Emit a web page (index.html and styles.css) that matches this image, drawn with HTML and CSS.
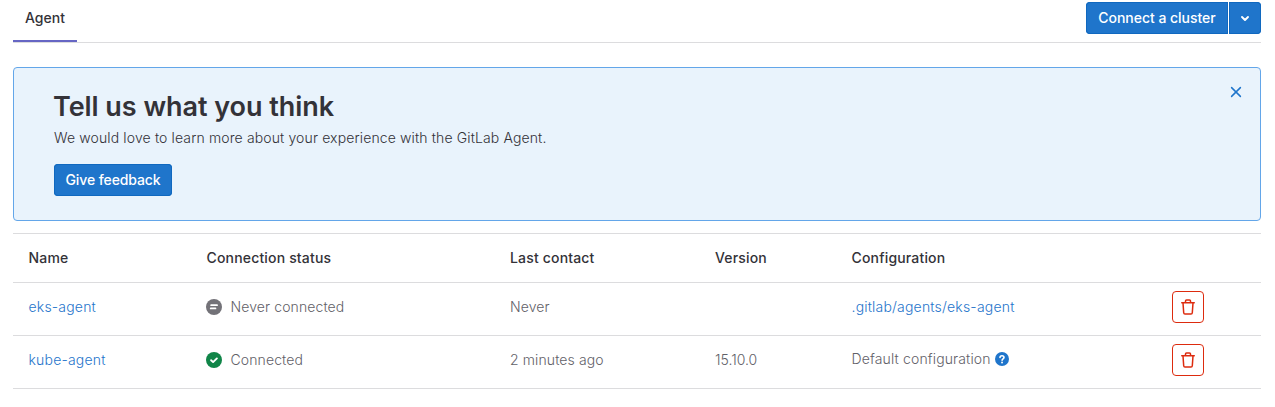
FILE: index.html
```html
<!DOCTYPE html>
<html lang="en">
<head>
<meta charset="utf-8">
<title>Kubernetes clusters</title>
<link rel="stylesheet" href="styles.css">
</head>
<body>
<main class="page">
  <header class="tabs">
    <a class="tab">Agent</a>
    <div class="btn-group">
      <button class="btn btn-main">Connect a cluster</button>
      <button class="btn btn-toggle" aria-label="Toggle dropdown">
        <svg width="16" height="16" viewBox="0 0 16 16"><path d="M5 7l3 3 3-3" fill="none" stroke="currentColor" stroke-width="1.9" stroke-linecap="round" stroke-linejoin="round"/></svg>
      </button>
    </div>
  </header>
  <section class="banner">
    <div class="banner-body">
      <h2 class="banner-title">Tell us what you think</h2>
      <p class="banner-text">We would love to learn more about your experience with the GitLab Agent.</p>
      <button class="btn btn-feedback">Give feedback</button>
    </div>
    <svg class="close" width="16" height="16" viewBox="0 0 16 16"><path d="M3.6 3.6l8.8 8.8M12.4 3.6l-8.8 8.8" fill="none" stroke="currentColor" stroke-width="1.5" stroke-linecap="round"/></svg>
  </section>
  <table class="agents">
    <colgroup><col class="c-name"><col class="c-status"><col class="c-contact"><col class="c-version"><col class="c-config"><col></colgroup>
    <thead>
      <tr><th>Name</th><th>Connection status</th><th>Last contact</th><th>Version</th><th>Configuration</th><th></th></tr>
    </thead>
    <tbody>
      <tr>
        <td><a class="link">eks-agent</a></td>
        <td><span class="status"><svg width="16" height="16" viewBox="0 0 16 16"><circle cx="8" cy="8" r="8" fill="#737278"/><path d="M5.1 6.2h6M4.7 9.4h4.8" fill="none" stroke="#fff" stroke-width="1.7" stroke-linecap="round"/></svg>Never connected</span></td>
        <td>Never</td>
        <td></td>
        <td><a class="link">.gitlab/agents/eks-agent</a></td>
        <td><button class="trash" aria-label="Delete agent"><svg width="16" height="16" viewBox="0 0 16 16"><path d="M1.75 3.75h12.5M5.5 3.5V2a1 1 0 0 1 1-1h3a1 1 0 0 1 1 1v1.5M3 4l.7 9.8a1.3 1.3 0 0 0 1.3 1.2h6a1.3 1.3 0 0 0 1.3-1.2L13 4" fill="none" stroke="currentColor" stroke-width="1.5" stroke-linecap="round"/></svg></button></td>
      </tr>
      <tr>
        <td><a class="link">kube-agent</a></td>
        <td><span class="status"><svg width="16" height="16" viewBox="0 0 16 16"><circle cx="8" cy="8" r="8" fill="#108548"/><path d="M5.1 8.2l2 1.9 3.8-3.7" fill="none" stroke="#fff" stroke-width="1.9" stroke-linecap="round" stroke-linejoin="round"/></svg>Connected</span></td>
        <td>2 minutes ago</td>
        <td><span class="version">15.10.0</span></td>
        <td class="cell-default"><span class="default">Default configuration<svg width="14" height="14" viewBox="0 0 14 14"><circle cx="7" cy="7" r="7" fill="#1f75cb"/><path d="M5 5.4C5 4.4 5.8 3.7 7 3.7s2 .7 2 1.7c0 1.4-1.9 1.4-1.9 2.8" fill="none" stroke="#fff" stroke-width="1.6" stroke-linecap="round"/><circle cx="7.05" cy="10.5" r=".95" fill="#fff"/></svg></span></td>
        <td><button class="trash" aria-label="Delete agent"><svg width="16" height="16" viewBox="0 0 16 16"><path d="M1.75 3.75h12.5M5.5 3.5V2a1 1 0 0 1 1-1h3a1 1 0 0 1 1 1v1.5M3 4l.7 9.8a1.3 1.3 0 0 0 1.3 1.2h6a1.3 1.3 0 0 0 1.3-1.2L13 4" fill="none" stroke="currentColor" stroke-width="1.5" stroke-linecap="round"/></svg></button></td>
      </tr>
    </tbody>
  </table>
</main>
</body>
</html>
```
FILE: styles.css
```css
* { box-sizing: border-box; }
body {
  margin: 0;
  background: #fff;
  color: #333238;
  font: 350 14px/20px Inter, sans-serif;
}
svg { display: block; flex: none; }
.page { width: 1248px; margin-left: 13px; }
.tabs {
  display: flex;
  justify-content: space-between;
  align-items: stretch;
  height: 43px;
  border-bottom: 1px solid #dcdcde;
}
.tab {
  width: 64px;
  padding: 8px 0 0 12px;
  border-bottom: 2px solid #6666c4;
  font-weight: 500;
}
.btn-group { display: flex; gap: 1px; padding-top: 2px; }
.btn {
  display: flex;
  align-items: center;
  justify-content: center;
  height: 32px;
  padding: 0;
  border: 0;
  border-radius: 4px;
  background: #1f75cb;
  box-shadow: inset 0 0 0 1px #1068bf;
  color: #fff;
  font: 500 14px/16px Inter, sans-serif;
  white-space: nowrap;
}
.btn-main { width: 142px; border-radius: 4px 0 0 4px; letter-spacing: -0.03px; }
.btn-toggle { width: 32px; border-radius: 0 4px 4px 0; }
.banner {
  display: flex;
  justify-content: space-between;
  height: 154px;
  margin-top: 24px;
  padding: 16px 16px 0 40px;
  border: 1px solid #63a6e9;
  border-radius: 4px;
  background: #e9f3fc;
}
.banner-title {
  margin: 8px 0 0 -1px;
  font-size: 27px;
  font-weight: 580;
  line-height: 30px;
  letter-spacing: -0.05px;
  white-space: nowrap;
}
.banner-text { margin: 6px 0 16px; letter-spacing: 0.13px; white-space: nowrap; }
.btn-feedback { width: 118px; letter-spacing: -0.1px; }
.close { color: #1f75cb; }
.agents {
  width: 100%;
  margin-top: 12px;
  border-collapse: separate;
  border-spacing: 0;
  table-layout: fixed;
  border-bottom: 1px solid #dcdcde;
}
.c-name { width: 178px; }
.c-status { width: 303.5px; }
.c-contact { width: 205px; }
.c-version { width: 136.5px; }
.c-config { width: 320px; }
th, td {
  padding: 0 0 0 15.5px;
  border-top: 1px solid #dcdcde;
  text-align: left;
  vertical-align: middle;
  white-space: nowrap;
}
th { height: 49px; font-weight: 500; letter-spacing: 0.17px; }
td { height: 53px; color: #626168; padding-bottom: 4px; letter-spacing: 0.11px; }
.cell-default { padding-bottom: 6px; letter-spacing: 0.14px; }
.link { color: #1f75cb; letter-spacing: 0.19px; }
.version { letter-spacing: 0; }
.status { display: flex; align-items: center; gap: 9px; margin-left: -1px; }
.default { display: flex; align-items: center; gap: 4px; }
.trash {
  display: flex;
  align-items: center;
  justify-content: center;
  width: 32px;
  height: 32px;
  padding: 0;
  border: 1px solid #dd2b0e;
  border-radius: 4px;
  background: #fff;
  color: #dd2b0e;
}
```
